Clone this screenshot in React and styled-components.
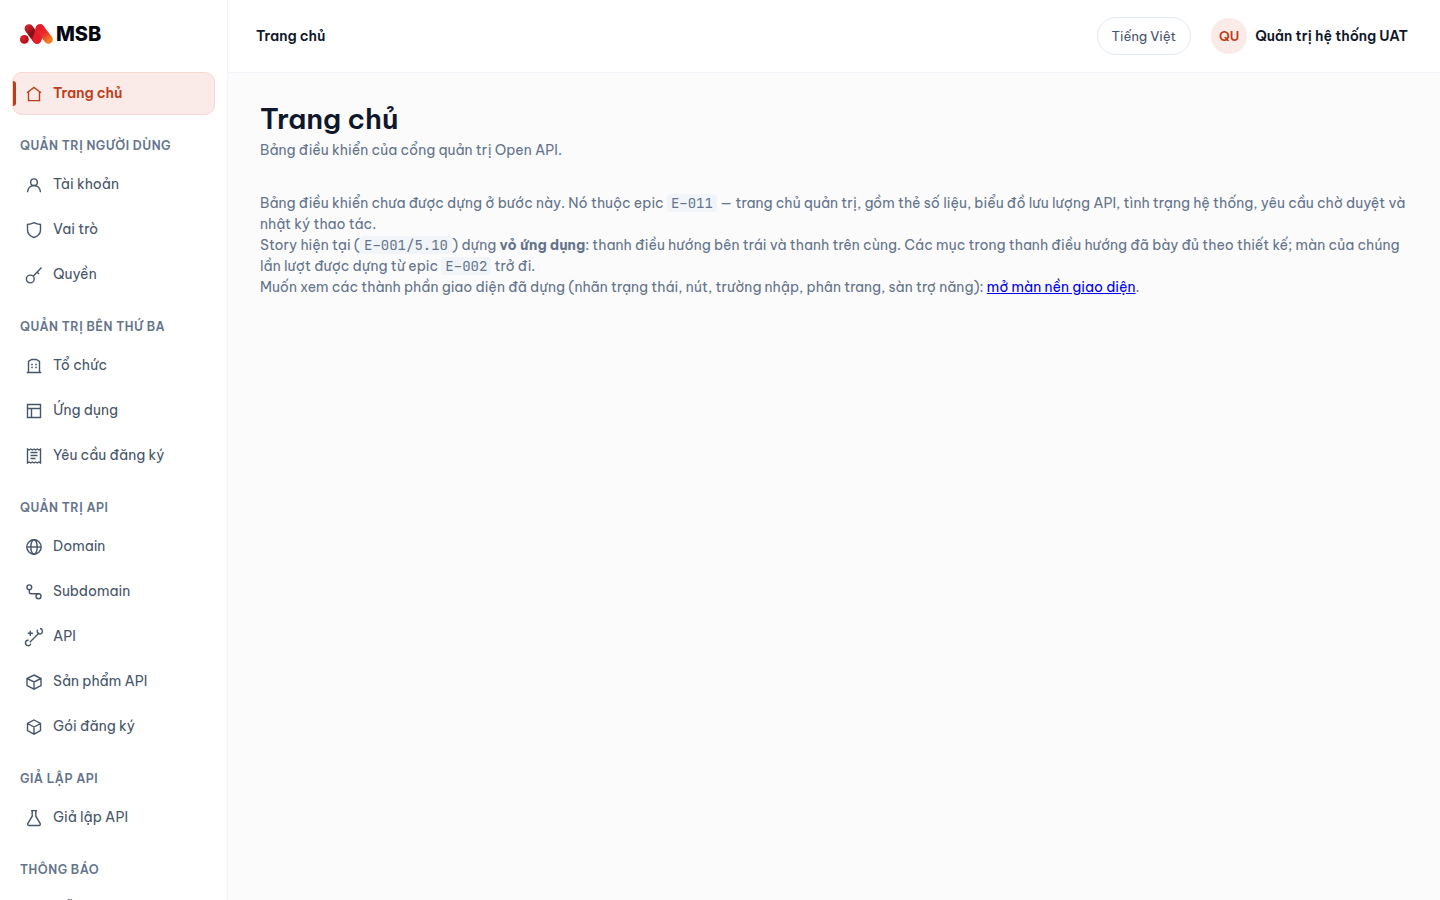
import React, { useState } from 'react';
import styled, { createGlobalStyle } from 'styled-components';

const icons = {
    home: <path d="M2 7.8 9 2.5l7 5.3M3.5 7v8.6h11V7" />,
    user: <><circle cx="9" cy="6.2" r="3.3" /><path d="M2.5 16.2c.3-4 2.9-6.7 6.5-6.7s6.2 2.7 6.5 6.7" /></>,
    shield: <path d="M9 1.7c2 1 4.2 1.6 6.5 1.8v5c0 4-2.5 6.8-6.5 8-4-1.2-6.5-4-6.5-8v-5c2.3-.2 4.5-.8 6.5-1.8z" />,
    key: <><circle cx="5.3" cy="13" r="3.9" /><path d="M8.2 10.2 16.5 1.5M12 6l2 2" /></>,
    building: <><path d="M1.7 15.5h14.6M3.5 15.5v-11l3.2-2h4.6l3.2 2v11" /><path d="M6.2 7.5h1.6M10.2 7.5h1.6M6.2 10.5h1.6M10.2 10.5h1.6" /></>,
    layout: <path d="M2.5 2.5h13v13h-13zM2.5 6.5h13M6.5 6.5v9" />,
    receipt: <><path d="M2.5 2l1.6 1 1.6-1 1.7 1L9 2l1.6 1 1.7-1 1.6 1 1.6-1v14l-1.6-1-1.6 1-1.7-1L9 16l-1.6-1-1.7 1-1.6-1-1.6 1z" /><path d="M5.5 5.5h7M5.5 8.5h7M5.5 11.5h5" /></>,
    globe: <><circle cx="9" cy="9" r="7.2" /><ellipse cx="9" cy="9" rx="3.2" ry="7.2" /><path d="M1.8 9h14.4" /></>,
    branch: <><circle cx="4.3" cy="4.3" r="2.4" /><circle cx="13.5" cy="13.2" r="2.5" /><path d="M4.3 6.7v2a2 2 0 0 0 2 2h7.2" /></>,
    api: <><path d="M5.3 2.7v5.2M2.7 5.3h5.200M4.8 14.200l9.400-9.400" /><path d="M3.600 12.300a2.700 2.700 0 1 0 2.200 3.300M12.700 1.800a2.600 2.600 0 1 0 4.600 1M15 .5a2.500 2.500 0 0 1 2.300 2.300" /></>,
    boxWide: <path d="M9 2l7 3.5v7l-7 3.700-7-3.700v-7zM2 5.500 9 9l7-3.500M9 9v7.200" />,
    box: <path d="M9 2l6.500 3.500v7.200L9 16.200l-6.500-3.500V5.500zM2.500 5.500 9 9l6.500-3.500M9 9v7.200" />,
    flask: <path d="M6 1.600h6M7.200 1.600v5.600L2.900 14.400c-.6 1.100 0 2.100 1.200 2.100h9.800c1.200 0 1.800-1 1.200-2.100L10.800 7.200V1.600" />,
    bell: <path d="M4 13V8a5 5 0 0 1 10 0v5l1.500 1h-13zM7.500 16.500h3" />,
};

const groups = [
    { title: "Quản trị người dùng", items: [["user", "Tài khoản"], ["shield", "Vai trò"], ["key", "Quyền"]] },
    { title: "Quản trị bên thứ ba", items: [["building", "Tổ chức"], ["layout", "Ứng dụng"], ["receipt", "Yêu cầu đăng ký"]] },
    { title: "Quản trị API", items: [["globe", "Domain"], ["branch", "Subdomain"], ["api", "API"], ["boxWide", "Sản phẩm API"], ["box", "Gói đăng ký"]] },
    { title: "Giả lập API", items: [["flask", "Giả lập API"]] },
    { title: "Thông báo", items: [["bell", "Mẫu thông báo"]] },
];

function NavItem({ icon, label, active, onSelect })
{
    return (
        <NavLink href="#" $active={active} aria-current={active ? "page" : undefined} onClick={(e)=>{e.preventDefault(); onSelect(label);}}>
            <Icon viewBox="0 0 18 18" aria-hidden="true">{icons[icon]}</Icon>
            {label}
        </NavLink>
    );
}

function Logo()
{
    return (
        <LogoLink href="#" aria-label="MSB">
            <LogoMark viewBox="0 0 33 20" aria-hidden="true">
                <defs>
                    <linearGradient id="dark" gradientUnits="userSpaceOnUse" x1="6" y1="2" x2="19" y2="17">
                        <stop offset="0" stopColor="#dc222c" />
                        <stop offset="0.5" stopColor="#7d0f14" />
                        <stop offset="1" stopColor="#e31b2c" />
                    </linearGradient>
                    <linearGradient id="warm" gradientUnits="userSpaceOnUse" x1="20" y1="4" x2="29" y2="16">
                        <stop offset="0" stopColor="#e61c2b" />
                        <stop offset="0.5" stopColor="#e8302a" />
                        <stop offset="1" stopColor="#f47b20" />
                    </linearGradient>
                    <radialGradient id="dot" cx="0.35" cy="0.35">
                        <stop offset="0" stopColor="#e3202f" />
                        <stop offset="1" stopColor="#b31319" />
                    </radialGradient>
                </defs>
                <circle cx="4.4" cy="15.4" r="4.4" fill="url(#dot)" />
                <path d="M9 4.6 17 15.4" stroke="url(#dark)" strokeWidth="8.8" strokeLinecap="round" />
                <path d="M20 4.6 17 15.4" stroke="#e61c2b" strokeWidth="8.8" strokeLinecap="round" />
                <path d="M20 4.6 28.4 15.4" stroke="url(#warm)" strokeWidth="8.8" strokeLinecap="round" />
            </LogoMark>
            <LogoText>MSB</LogoText>
        </LogoLink>
    );
}

function App()
{
    let [current, sCurrent] = useState("Trang chủ");

    return (
        <Shell>
            <GlobalStyle />
            <SideBar>
                <Logo />
                <nav aria-label="Điều hướng">
                    <NavItem icon="home" label="Trang chủ" active={current === "Trang chủ"} onSelect={sCurrent} />
                    {groups.map((group) => (
                        <section key={group.title}>
                            <GroupTitle>{group.title}</GroupTitle>
                            <NavList>
                                {group.items.map(([icon, label]) => (
                                    <li key={label}><NavItem icon={icon} label={label} active={current === label} onSelect={sCurrent} /></li>
                                ))}
                            </NavList>
                        </section>
                    ))}
                </nav>
            </SideBar>
            <Main>
                <TopBar>
                    <PageName>Trang chủ</PageName>
                    <LangButton type="button">Tiếng Việt</LangButton>
                    <UserButton type="button">
                        <Avatar>QU</Avatar>
                        Quản trị hệ thống UAT
                    </UserButton>
                </TopBar>
                <Content>
                    <Title>Trang chủ</Title>
                    <p>Bảng điều khiển của cổng quản trị Open API.</p>
                    <Notes>
                        <p>
                            Bảng điều khiển chưa được dựng ở bước này. Nó thuộc epic <Code>E–011</Code> — trang chủ quản trị, gồm thẻ số liệu, biểu đồ lưu lượng API, tình trạng hệ thống, yêu cầu chờ duyệt và nhật ký thao tác.
                        </p>
                        <p>
                            Story hiện tại (<Code>E–001/5.10</Code>) dựng <strong>vỏ ứng dụng</strong>: thanh điều hướng bên trái và thanh trên cùng. Các mục trong thanh điều hướng đã bày đủ theo thiết kế; màn của chúng lần lượt được dựng từ epic <Code>E–002</Code> trở đi.
                        </p>
                        <p>
                            Muốn xem các thành phần giao diện đã dựng (nhãn trạng thái, nút, trường nhập, phân trang, sàn trợ năng): <TextLink href="#">mở màn nền giao diện</TextLink>.
                        </p>
                    </Notes>
                </Content>
            </Main>
        </Shell>
    );
}

const GlobalStyle = createGlobalStyle`
    *
    {
        box-sizing: border-box;
    }

    body
    {
        margin: 0;
        background-color: #fbfbfb;
        color: #64748b;
        font-family: "Be Vietnam Pro", Inter, sans-serif;
        font-size: 14px;
        line-height: 21px;
    }

    p
    {
        margin: 0;
    }

    button
    {
        font: inherit;
        cursor: pointer;
    }
`;

const Shell = styled.div`
    display: flex;
    height: 100vh;
`;

const SideBar = styled.aside`
    flex: none;
    width: 228px;
    padding: 0 12px;
    overflow: hidden;
    background-color: white;
    border-right: 1px solid #f1f5f9;
`;

const LogoLink = styled.a`
    display: flex;
    align-items: center;
    gap: 3px;
    height: 72px;
    padding: 0 8px 4px;
    text-decoration: none;
`;

const LogoMark = styled.svg`
    width: 33px;
    height: 20px;
    fill: none;
`;

const LogoText = styled.span`
    color: #05070f;
    font-family: Inter, sans-serif;
    font-size: 20px;
    font-weight: 800;
`;

const NavLink = styled.a`
    position: relative;
    display: flex;
    align-items: center;
    gap: 10px;
    padding: 10px 12px;
    border: 1px solid ${p => p.$active ? "#f7d8d0" : "transparent"};
    border-radius: 10px;
    background-color: ${p => p.$active ? "#faebe8" : "transparent"};
    color: ${p => p.$active ? "#c03c17" : "#475569"};
    font-weight: ${p => p.$active ? 600 : 400};
    text-decoration: none;

    &::before
    {
        content: "";
        display: ${p => p.$active ? "block" : "none"};
        position: absolute;
        left: 0;
        top: 8px;
        bottom: 8px;
        width: 3px;
        border-radius: 0 3px 3px 0;
        background-color: #c03c17;
    }
`;

const Icon = styled.svg`
    flex: none;
    width: 18px;
    height: 18px;
    overflow: visible;
    fill: none;
    stroke: currentColor;
    stroke-width: 1.4;
`;

const GroupTitle = styled.h2`
    margin: 0;
    padding: 21px 8px 7px;
    color: #64748b;
    font-size: 12px;
    font-weight: 600;
    line-height: 20px;
    letter-spacing: 0.5px;
    text-transform: uppercase;
`;

const NavList = styled.ul`
    display: flex;
    flex-direction: column;
    gap: 2px;
    margin: 0;
    padding: 0;
    list-style: none;
`;

const Main = styled.main`
    flex: 1;
    min-width: 0;
`;

const TopBar = styled.header`
    display: flex;
    align-items: center;
    gap: 20px;
    height: 73px;
    padding: 0 32px 0 28px;
    background-color: white;
    border-bottom: 1px solid #f1f5f9;
`;

const PageName = styled.span`
    margin-right: auto;
    color: #0f172a;
    font-weight: 600;
`;

const LangButton = styled.button`
    height: 38px;
    padding: 0 14px;
    border: 1px solid #e2e8f0;
    border-radius: 19px;
    background-color: white;
    color: #475569;
    font-size: 13px;
    line-height: 20px;
`;

const UserButton = styled.button`
    display: flex;
    align-items: center;
    gap: 8px;
    padding: 0;
    border: none;
    background: none;
    color: #0f172a;
    font-weight: 600;
`;

const Avatar = styled.span`
    display: flex;
    align-items: center;
    justify-content: center;
    width: 36px;
    height: 36px;
    border-radius: 50%;
    background-color: #faebe8;
    color: #c03c17;
    font-size: 13px;
    line-height: 20px;
`;

const Content = styled.div`
    padding: 28px 32px;
`;

const Title = styled.h1`
    margin: 0 0 3px;
    color: #0f172a;
    font-size: 28px;
    font-weight: 600;
    line-height: 36px;
`;

const Notes = styled.div`
    margin-top: 32px;
`;

const Code = styled.code`
    padding: 0 4px;
    border-radius: 4px;
    background-color: #f1f5f9;
    font-family: "JetBrains Mono", "Liberation Mono", monospace;
    font-size: 14px;
    line-height: 1;
`;

const TextLink = styled.a`
    color: #0000ee;
`;

export default App;
